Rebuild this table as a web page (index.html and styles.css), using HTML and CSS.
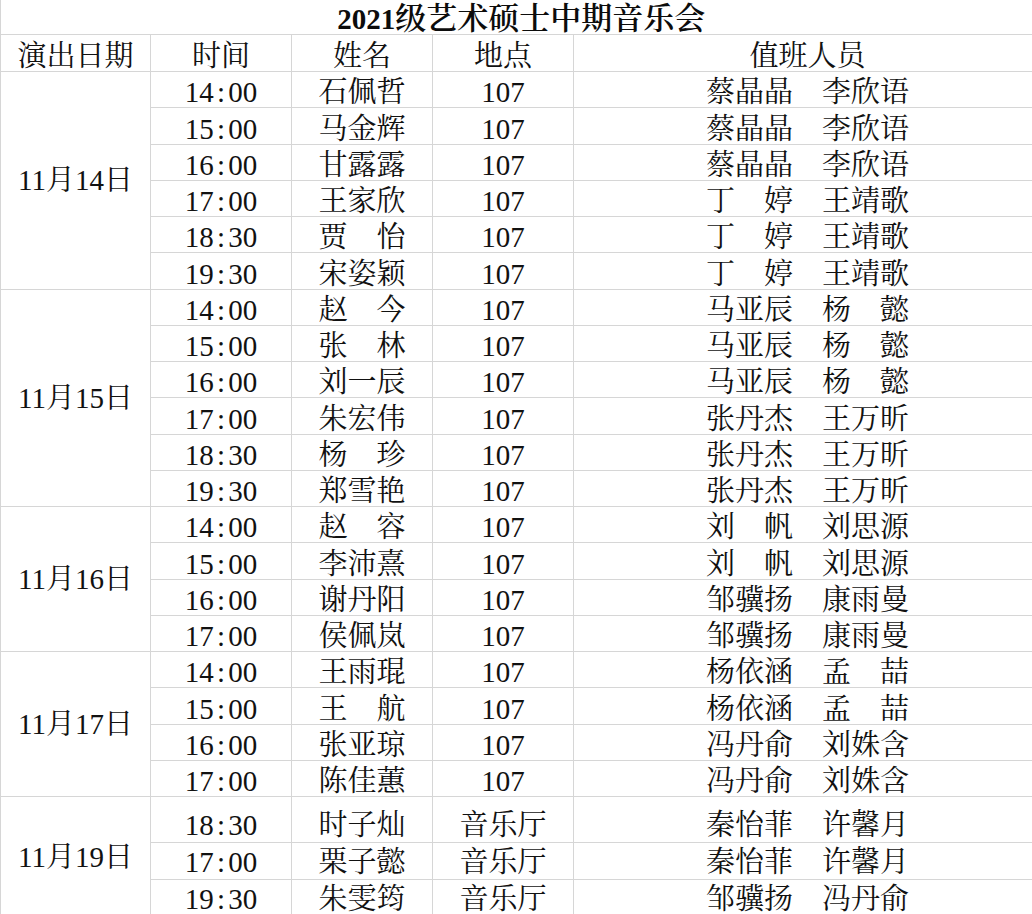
FILE: index.html
```html
<!DOCTYPE html>
<html lang="zh-CN">
<head>
<meta charset="utf-8">
<title>2021级艺术硕士中期音乐会</title>
<link rel="stylesheet" href="styles.css">
</head>
<body>
<table class="sheet">
  <colgroup>
    <col class="c-date"><col class="c-time"><col class="c-name"><col class="c-place"><col class="c-duty">
  </colgroup>
  <tr class="title-row"><td colspan="5" class="title"><span class="num">2021</span>级艺术硕士中期音乐会</td></tr>
  <tr class="head-row"><td class="head">演出日期</td><td>时间</td><td>姓名</td><td>地点</td><td>值班人员</td></tr>

  <tr class="r"><td rowspan="6" class="date">11月14日</td><td>14<span class="colon">:</span>00</td><td>石佩哲</td><td>107</td><td>蔡晶晶　李欣语</td></tr>
  <tr class="r"><td>15<span class="colon">:</span>00</td><td>马金辉</td><td>107</td><td>蔡晶晶　李欣语</td></tr>
  <tr class="r"><td>16<span class="colon">:</span>00</td><td>甘露露</td><td>107</td><td>蔡晶晶　李欣语</td></tr>
  <tr class="r"><td>17<span class="colon">:</span>00</td><td>王家欣</td><td>107</td><td>丁　婷　王靖歌</td></tr>
  <tr class="r"><td>18<span class="colon">:</span>30</td><td>贾　怡</td><td>107</td><td>丁　婷　王靖歌</td></tr>
  <tr class="r"><td>19<span class="colon">:</span>30</td><td>宋姿颖</td><td>107</td><td>丁　婷　王靖歌</td></tr>

  <tr class="r"><td rowspan="6" class="date">11月15日</td><td>14<span class="colon">:</span>00</td><td>赵　今</td><td>107</td><td>马亚辰　杨　懿</td></tr>
  <tr class="r"><td>15<span class="colon">:</span>00</td><td>张　林</td><td>107</td><td>马亚辰　杨　懿</td></tr>
  <tr class="r"><td>16<span class="colon">:</span>00</td><td>刘一辰</td><td>107</td><td>马亚辰　杨　懿</td></tr>
  <tr class="r"><td>17<span class="colon">:</span>00</td><td>朱宏伟</td><td>107</td><td>张丹杰　王万昕</td></tr>
  <tr class="r"><td>18<span class="colon">:</span>30</td><td>杨　珍</td><td>107</td><td>张丹杰　王万昕</td></tr>
  <tr class="r"><td>19<span class="colon">:</span>30</td><td>郑雪艳</td><td>107</td><td>张丹杰　王万昕</td></tr>

  <tr class="r"><td rowspan="4" class="date">11月16日</td><td>14<span class="colon">:</span>00</td><td>赵　容</td><td>107</td><td>刘　帆　刘思源</td></tr>
  <tr class="r"><td>15<span class="colon">:</span>00</td><td>李沛熹</td><td>107</td><td>刘　帆　刘思源</td></tr>
  <tr class="r"><td>16<span class="colon">:</span>00</td><td>谢丹阳</td><td>107</td><td>邹骥扬　康雨曼</td></tr>
  <tr class="r"><td>17<span class="colon">:</span>00</td><td>侯佩岚</td><td>107</td><td>邹骥扬　康雨曼</td></tr>

  <tr class="r"><td rowspan="4" class="date">11月17日</td><td>14<span class="colon">:</span>00</td><td>王雨琨</td><td>107</td><td>杨依涵　孟　喆</td></tr>
  <tr class="r"><td>15<span class="colon">:</span>00</td><td>王　航</td><td>107</td><td>杨依涵　孟　喆</td></tr>
  <tr class="r"><td>16<span class="colon">:</span>00</td><td>张亚琼</td><td>107</td><td>冯丹俞　刘姝含</td></tr>
  <tr class="r"><td>17<span class="colon">:</span>00</td><td>陈佳蕙</td><td>107</td><td>冯丹俞　刘姝含</td></tr>

  <tr class="r tall"><td rowspan="3" class="date">11月19日</td><td>18<span class="colon">:</span>30</td><td>时子灿</td><td>音乐厅</td><td>秦怡菲　许馨月</td></tr>
  <tr class="r mid"><td>17<span class="colon">:</span>00</td><td>栗子懿</td><td>音乐厅</td><td>秦怡菲　许馨月</td></tr>
  <tr class="r mid"><td>19<span class="colon">:</span>30</td><td>朱雯筠</td><td>音乐厅</td><td>邹骥扬　冯丹俞</td></tr>
</table>
</body>
</html>
```

FILE: styles.css
```css
html, body {
  margin: 0;
  padding: 0;
  background: #ffffff;
  overflow: hidden;
}

body {
  width: 1032px;
  height: 914px;
}

.sheet {
  border-collapse: collapse;
  table-layout: fixed;
  width: 1041px;
  font-family: "Liberation Serif", "Noto Serif CJK SC", "Noto Sans CJK SC", serif;
  font-size: 29px;
  font-weight: 400;
  color: #111111;
  border-left: 1px solid #d2d2d2;
}

.c-date { width: 150px; }
.c-time { width: 141px; }
.c-name { width: 141px; }
.c-place { width: 141px; }
.c-duty { width: 468px; }

.sheet td {
  border: 1px solid #d6d6d6;
  padding: 0 0 3px 0;
  text-align: center;
  vertical-align: bottom;
  line-height: 24px;
  white-space: nowrap;
  overflow: hidden;
}

.title-row td {
  height: 31px;
  border-top: none;
  border-right: none;
}

.title {
  font-size: 31px;
  font-weight: 600;
  color: #0c0c0c;
}

.title .num {
  font-size: 29px;
}

.head-row td {
  height: 33px;
}

.r td {
  height: 32.25px;
}

.r.tall td {
  height: 40px;
  padding-bottom: 5px;
}

.r.mid td {
  height: 31px;
  padding-bottom: 5px;
}

.sheet td.date {
  vertical-align: middle;
  padding: 0;
}

.colon {
  display: inline-block;
  width: 0.5em;
  text-align: center;
}
```
